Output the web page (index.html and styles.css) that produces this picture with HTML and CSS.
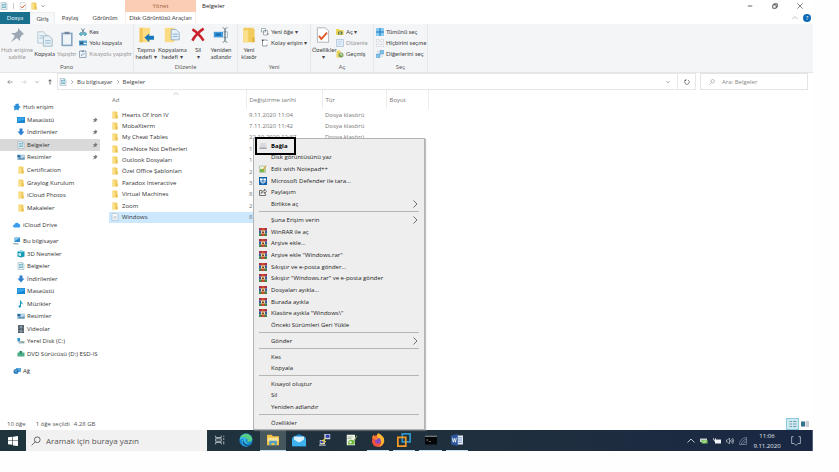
FILE: index.html
```html
<!DOCTYPE html>
<html lang="tr">
<head>
<meta charset="utf-8">
<title>Belgeler</title>
<link rel="stylesheet" href="styles.css">
</head>
<body>
<svg class="sprite" aria-hidden="true">
  <symbol id="folder" viewBox="0 0 16 16"><path d="M3 1h8l2 2v12H3z" fill="#f3cf62"/><path d="M3 3h5v12H3z" fill="#fbe08c"/><path d="M11 9h2v6h-2z" fill="#e0b23f"/></symbol>
  <symbol id="doc" viewBox="0 0 16 16"><path d="M2 1h9l3 3v11H2z" fill="#e8f1f4" stroke="#8ea7b2"/><path d="M4 5h4M4 8h8M4 11h8" stroke="#4c9cb8" stroke-width="1.4"/><path d="M9 3h3v3H9z" fill="#6ab0c8"/></symbol>
  <symbol id="disc" viewBox="0 0 16 16"><path d="M2 1h9l3 3v11H2z" fill="#f7f9fb" stroke="#9aabb8"/><circle cx="8" cy="9" r="3.5" fill="#c5d3dd"/><circle cx="8" cy="9" r="1" fill="#fff"/></symbol>
  <symbol id="desktop" viewBox="0 0 16 16"><path d="M0 2h16v12H0z" fill="#1586d3"/><path d="M1 3h14v4L1 12z" fill="#37a4ea"/></symbol>
  <symbol id="down" viewBox="0 0 16 16"><path d="M5 1h6v6h4l-7 8-7-8h4z" fill="#2f7fd0"/></symbol>
  <symbol id="picture" viewBox="0 0 16 16"><path d="M0 3h16v11H0z" fill="#b9d3e6"/><path d="M1 4h6v5H1z" fill="#2d6da5"/><path d="M1 13l5-4 4 2 5-3v5z" fill="#5b8bad"/></symbol>
  <symbol id="star" viewBox="0 0 16 16"><path d="M5 2l6-1 1 5 4 2-4 2-1 5-4-2-5 2 1-5-2-4 4-1z" fill="#2790d8"/></symbol>
  <symbol id="cloud" viewBox="0 0 16 16"><path d="M3 13a3 3 0 010-6 5 5 0 019-1 4 4 0 011 7z" fill="#3c9df0"/></symbol>
  <symbol id="pc" viewBox="0 0 16 16"><path d="M3 1h11v9H3z" fill="#2d8bcb"/><path d="M4 2h9L4 8z" fill="#86c8ef"/><path d="M0 12h10l2 3H1z" fill="#9fb6c4"/></symbol>
  <symbol id="cube" viewBox="0 0 16 16"><path d="M1 3l7-2 7 2v10l-7 2-7-2z" fill="#169bb5"/><path d="M1 3l7-2 7 2-7 2z" fill="#7ddae4"/><path d="M3 6l5 1v5l-5-1z" fill="#d7f3f5"/></symbol>
  <symbol id="music" viewBox="0 0 16 16"><path d="M6 1h2c0 4 5 4 3 9 0-3-2-3-3-3v6c0 3-5 3-5 0 0-2 2-3 3-2z" fill="#1b9bc4"/></symbol>
  <symbol id="video" viewBox="0 0 16 16"><path d="M2 0h12v16H2z" fill="#4a525a"/><path d="M5 1h6v6H5zM5 9h6v6H5z" fill="#8495a5"/><path d="M3 1v15M13 1v15" stroke="#d0d5da" stroke-dasharray="1 2"/></symbol>
  <symbol id="drive" viewBox="0 0 16 16"><path d="M1 2h5v7H1z" fill="#2496c9"/><path d="M3 8h12v5H3z" fill="#a8b5bd"/><path d="M10 11h4v1h-4z" fill="#38a85a"/></symbol>
  <symbol id="dvd" viewBox="0 0 16 16"><path d="M1 5h14v8H1z" fill="#4caf8a"/><path d="M5 2h5v5H5z" fill="#2c8a66"/></symbol>
  <symbol id="network" viewBox="0 0 16 16"><path d="M6 2h10v8H6z" fill="#56a6db"/><circle cx="6" cy="9" r="5" fill="#2577b8"/><path d="M3 8h5M6 5v8" stroke="#9bd0f2"/></symbol>
  <symbol id="pin" viewBox="0 0 16 16"><path d="M9 1l6 6-2 1-2 3v3l-3-3-6 4 4-6-4-3h4l3-2z" fill="currentColor"/></symbol>
  <symbol id="check" viewBox="0 0 16 20"><path d="M1 1h10l4 4v14H1z" fill="#fff" stroke="#a0a6ab"/><path d="M3 11l3 4 7-8" fill="none" stroke="#df5a2c" stroke-width="2.4"/></symbol>
  <symbol id="pages" viewBox="0 0 20 20"><path d="M1 1h7l4 4v10H1z" fill="#edf3f7" stroke="#a9bfcc"/><path d="M8 6h7l4 4v9H8z" fill="#e5eff5" stroke="#94b0c0"/><path d="M3 6h5M3 9h4M10 12h7M10 15h7" stroke="#8cb4ca"/></symbol>
  <symbol id="clipboard" viewBox="0 0 16 20"><path d="M1 2h14v17H1z" fill="#5d84af"/><path d="M3 4h10v13H3z" fill="#eef4fa"/><path d="M5 1h6v3H5z" fill="#40597a"/></symbol>
  <symbol id="scissors" viewBox="0 0 16 16"><path d="M5 1l5 9M11 1L6 10" stroke="#4a7181" stroke-width="1.6"/><circle cx="4" cy="12" r="2.5" fill="none" stroke="#178aa5" stroke-width="2"/><circle cx="12" cy="12" r="2.5" fill="none" stroke="#178aa5" stroke-width="2"/></symbol>
  <symbol id="path" viewBox="0 0 16 16"><path d="M0 3h16v10H0z" fill="#5aa7d6"/><path d="M2 5l2 6 2-6 2 6" stroke="#153e63" stroke-width="1.4" fill="none"/><path d="M10 9h5" stroke="#fff" stroke-width="2"/></symbol>
  <symbol id="shortcut" viewBox="0 0 16 16"><path d="M1 2h13v13H1z" fill="#eef3f8" stroke="#7c92a8" stroke-width="1.5"/><path d="M5 1h5v3H5z" fill="#7c92a8"/><path d="M5 12c0-4 3-5 6-4" stroke="#6284a6" stroke-width="1.5" fill="none"/></symbol>
  <symbol id="move" viewBox="0 0 20 20"><path d="M2 1h13v18H2z" fill="#fbdc83"/><path d="M2 1h4v18H2z" fill="#f1c75b"/><path d="M8 13l6-5v3h6v5h-6v3z" fill="#1879b8"/></symbol>
  <symbol id="copyto" viewBox="0 0 20 20"><path d="M1 1h12v18H1z" fill="#fbdc83"/><path d="M9 3h6l4 4v9H9z" fill="#e4effa" stroke="#86a5c0"/><path d="M11 9h6M11 12h6" stroke="#6f9fca"/></symbol>
  <symbol id="cross" viewBox="0 0 20 20"><path d="M3 3c5 3 10 8 14 14M17 2C11 6 6 11 3 17" stroke="#c9202b" stroke-width="3.2" fill="none"/></symbol>
  <symbol id="rename" viewBox="0 0 20 20"><path d="M1 6h12v7H1z" fill="#3f9adb"/><path d="M3 8h7v3H3z" fill="#1c6cb0"/><path d="M13 6h5v7h-5" fill="#fff" stroke="#88a5b8"/><path d="M12 1c2 0 3 1 3 3v12c0 2-1 3-3 3M18 1c-2 0-3 1-3 3v12c0 2 1 3 3 3" stroke="#5c6e7a" fill="none"/></symbol>
  <symbol id="bigfolder" viewBox="0 0 20 20"><path d="M3 1h12l2 2v16H3z" fill="#f1cb5c"/><path d="M3 4h6v15H3z" fill="#fbe08c"/><path d="M14 13h3v6h-3z" fill="#e1b545"/></symbol>
  <symbol id="newitem" viewBox="0 0 16 16"><path d="M1 1h8v7H1zM5 5h8v9H5z" fill="#fff" stroke="#7e9099" stroke-width="1.4"/><path d="M11 12h5" stroke="#555"/></symbol>
  <symbol id="ease" viewBox="0 0 16 16"><path d="M12 4V2H3v12h9v-3" fill="#fff" stroke="#75838b" stroke-width="1.5"/><path d="M1 1l5 1-3 3z" fill="#444"/></symbol>
  <symbol id="openf" viewBox="0 0 16 16"><path d="M0 2h6l2 2h7v10H0z" fill="#efd55c"/><path d="M4 7h9v6H4z" fill="#5e7c3c"/><path d="M6 9h4v2H6z" fill="#e9ecf2"/></symbol>
  <symbol id="edit" viewBox="0 0 16 16"><path d="M1 1h14v14H1z" fill="#e2edf7" stroke="#a5bfd6" stroke-width="1.4"/><path d="M4 5h7M4 8h7M4 11h5" stroke="#aac8e2"/></symbol>
  <symbol id="history" viewBox="0 0 16 16"><path d="M1 1h8v14H1z" fill="#efd55c"/><circle cx="10" cy="10" r="5" fill="#7ba156"/><path d="M10 6v4h3" stroke="#fff" stroke-width="1.4" fill="none"/></symbol>
  <symbol id="selall" viewBox="0 0 16 16"><path d="M0 0h16v16H0z" fill="#8acbf1"/><path d="M8 0v16M0 8h16" stroke="#1b7bbb" stroke-width="2"/></symbol>
  <symbol id="selnone" viewBox="0 0 16 16"><path d="M1 1h5v5H1zM10 1h5v5h-5zM1 10h5v5H1zM10 10h5v5h-5z" fill="#fff" stroke="#a6b0b8" stroke-dasharray="2 1"/></symbol>
  <symbol id="selinv" viewBox="0 0 16 16"><path d="M8 1h7v7H8zM1 8h7v7H1z" fill="#85c4ed" stroke="#3a8fc6"/><path d="M2 3h4M11 12h3" stroke="#9aa5ad"/></symbol>
  <symbol id="search" viewBox="0 0 16 16"><circle cx="10" cy="6" r="4.6" fill="none" stroke="currentColor" stroke-width="1.4"/><path d="M7 9l-6 6" stroke="currentColor" stroke-width="1.4"/></symbol>
  <symbol id="left" viewBox="0 0 16 16"><path d="M15 8H2M7 3L2 8l5 5" fill="none" stroke="currentColor" stroke-width="1.5"/></symbol>
  <symbol id="right" viewBox="0 0 16 16"><path d="M1 8h13M9 3l5 5-5 5" fill="none" stroke="currentColor" stroke-width="1.5"/></symbol>
  <symbol id="up" viewBox="0 0 16 16"><path d="M8 15V2M4 6l4-4 4 4" fill="none" stroke="currentColor" stroke-width="1.8"/></symbol>
  <symbol id="chev" viewBox="0 0 16 16"><path d="M2 5l6 6 6-6" fill="none" stroke="currentColor" stroke-width="2"/></symbol>
  <symbol id="chevup" viewBox="0 0 16 16"><path d="M1 11l7-7 7 7" fill="none" stroke="currentColor" stroke-width="1.6"/></symbol>
  <symbol id="chevright" viewBox="0 0 16 16"><path d="M5 1l7 7-7 7" fill="none" stroke="currentColor" stroke-width="1.7"/></symbol>
  <symbol id="refresh" viewBox="0 0 16 16"><path d="M5 3a6 6 0 106 0M5 0v4H1" fill="none" stroke="currentColor" stroke-width="1.7"/></symbol>
  <symbol id="winmin" viewBox="0 0 16 16"><path d="M2 8h12" stroke="currentColor" stroke-width="2"/></symbol>
  <symbol id="winmax" viewBox="0 0 16 16"><path d="M2 5h9v9H2zM5 5V2h9v9h-3" fill="none" stroke="currentColor" stroke-width="2"/></symbol>
  <symbol id="winclose" viewBox="0 0 16 16"><path d="M1 1l14 14M15 1L1 15" stroke="currentColor" stroke-width="1.6"/></symbol>
  <symbol id="rar" viewBox="0 0 16 16"><path d="M0 0h16v5H0z" fill="#a62f45"/><path d="M0 5h16v6H0z" fill="#35589e"/><path d="M0 11h16v5H0z" fill="#3f8444"/><path d="M5 0h6v16H5z" fill="#d2492f"/><path d="M4 5h8v6H4z" fill="#f1dfa0"/><path d="M6 7h4v3H6z" fill="#774428"/></symbol>
  <symbol id="npp" viewBox="0 0 16 16"><path d="M1 2h12v13H1z" fill="#e9f2dd" stroke="#8b9a80"/><path d="M2 8h9v6H2z" fill="#78b84b"/><path d="M7 9l6-8 2 1-6 9z" fill="#d9a43a"/></symbol>
  <symbol id="nppbar" viewBox="0 0 16 16"><path d="M1 1h11v14H1z" fill="#eef4e6"/><path d="M2 4h7M2 6h5" stroke="#9aa894"/><path d="M3 14c-1-5 2-7 6-6 3 1 3 4 2 6z" fill="#6cb83a"/><circle cx="6" cy="11" r="1.5" fill="#fff"/><path d="M10 9l4-7 1 1-4 7z" fill="#8aa060"/></symbol>
  <symbol id="shield" viewBox="0 0 16 16"><path d="M0 0h16v16H0z" fill="#1464ac"/><path d="M2 3h12v6l-6 5-6-5z" fill="#fff"/><path d="M8 2v12M2 8h12" stroke="#1464ac" stroke-width="1.6"/></symbol>
  <symbol id="share" viewBox="0 0 16 16"><path d="M6 5H1v10h12v-4" fill="none" stroke="#333" stroke-width="1.3"/><path d="M4 11c1-5 4-6 7-6V2l4 5-4 4V8c-3 0-5 0-7 3z" fill="none" stroke="#333" stroke-width="1.2"/></symbol>
  <symbol id="mount" viewBox="0 0 16 16"><path d="M2 2h12l1 9v3H1v-3z" fill="#d8dadd"/><path d="M1 11h14v3H1z" fill="#a5a9ae"/></symbol>
  <symbol id="win" viewBox="0 0 16 16"><path d="M0 2l7-1v6H0zM8 1l8-1v7H8zM0 8h7v6l-7-1zM8 8h8v8l-8-1z" fill="#fff"/></symbol>
  <symbol id="taskview" viewBox="0 0 16 16"><path d="M1 1v3h9V1M1 15v-3h9v3M1 6h9v4H1zM14 1v2M14 5v3M14 10v5" fill="none" stroke="#c4ced3" stroke-width="1.3"/></symbol>
  <symbol id="edge" viewBox="0 0 16 16"><circle cx="8" cy="8" r="7.6" fill="#1682cf"/><path d="M1 6C3-1 13-1 15 6c1 4-3 5-6 4 2-2 0-4-2-4S3 6 1 6z" fill="#58cc83"/><path d="M1 6c4-3 9-1 7 2-1 2 2 5 6 4-4 6-11 3-11-2 0-2 1-3 3-3-2-1-4 0-5 2z" fill="#35b7e5"/><path d="M6 8c-2 3 3 7 8 4-3 5-10 3-10-2z" fill="#115696"/></symbol>
  <symbol id="explorer" viewBox="0 0 16 16"><path d="M0 1h6l2 2h8v12H0z" fill="#f4c344"/><path d="M1 5h14v5H1z" fill="#fbe29a"/><path d="M3 15V9h10v6h-3v-3H6v3z" fill="#4c9fc6"/></symbol>
  <symbol id="mail" viewBox="0 0 16 16"><path d="M0 5l8-4 8 4v10H0z" fill="#1585cc"/><path d="M2 4h12v7H2z" fill="#d9f1fc"/><path d="M0 6l8 5 8-5v9H0z" fill="#3db2ec"/></symbol>
  <symbol id="putty" viewBox="0 0 16 16"><path d="M7 0h8v7H7zM1 8h7v6H1z" fill="#c7ccd3"/><path d="M9 1h5v4H9zM2 9h5v3H2z" fill="#2b3bb5"/><path d="M9 6l-5 3 5 1-5 3" stroke="#f3dc38" fill="none" stroke-width="1.3"/><path d="M0 14h9v2H0z" fill="#8a929c"/></symbol>
  <symbol id="firefox" viewBox="0 0 16 16"><circle cx="8" cy="9" r="7" fill="#f0503c"/><path d="M8 0c4 2 8 5 7 10-1 3-3 5-6 6 4-4 3-7 0-8-2-2-3-5-1-8z" fill="#fcb72e"/><circle cx="8" cy="9" r="3.2" fill="#8649be"/><path d="M1 5l2-3 2 3h4l-3 3z" fill="#fb8a2c"/></symbol>
  <symbol id="vmware" viewBox="0 0 16 16"><path d="M6 1h9v9H6z" fill="none" stroke="#2b95c9" stroke-width="2"/><path d="M1 5h9v10H1z" fill="none" stroke="#f19a27" stroke-width="2"/></symbol>
  <symbol id="cmd" viewBox="0 0 16 16"><path d="M0 2h16v12H0z" fill="#050607"/><path d="M0 2h16v2H0z" fill="#70777c"/><path d="M2 7l2 1-2 1M5 10h3" stroke="#777" fill="none"/></symbol>
  <symbol id="word" viewBox="0 0 16 16"><path d="M6 2h10v12H6z" fill="#e9effa"/><path d="M9 5h6M9 8h6M9 11h6" stroke="#5577b5"/><path d="M0 2l9-2v16l-9-2z" fill="#2b579a"/><path d="M2 5l1 6 1.500-5L6 11l1-6" stroke="#fff" fill="none" stroke-width="1.100"/></symbol>
  <symbol id="gpu" viewBox="0 0 16 16"><path d="M0 3h14v7H0z" fill="#c8ced1"/><path d="M3 6h12v7H3z" fill="#7cc35c"/><path d="M6 9l2 2 3-4" stroke="#fff" stroke-width="1.500" fill="none"/></symbol>
  <symbol id="battery" viewBox="0 0 16 16"><path d="M4 5h12v8H4z" fill="#eef1f5"/><path d="M1 2v4h4V2M3 6v3" stroke="#eef1f5" stroke-width="1.300" fill="none"/></symbol>
  <symbol id="sound" viewBox="0 0 16 16"><path d="M1 6h2l4-4v12l-4-4H1zM9 6q2 2 0 4M11 4q4 4 0 8M13 2q5 6 0 12" stroke="#d5dbe2" stroke-width="1.200" fill="none"/></symbol>
  <symbol id="wifi" viewBox="0 0 16 16"><path d="M1 15A14 14 0 0115 1M5 15A10 10 0 0115 5M9 15a6 6 0 016-6M1 15h14V1" stroke="#8c98aa" stroke-width="1.300" fill="none"/></symbol>
  <symbol id="notif" viewBox="0 0 16 16"><path d="M4 1H1v11h4l3 3 3-3h4V1h-3" stroke="#b9c2ce" stroke-width="1.300" fill="none"/></symbol>
  <symbol id="details" viewBox="0 0 16 16"><path d="M1 3h5M1 8h5M1 13h5M8 3h7M8 8h7M8 13h7" stroke="#5d8796" stroke-width="1.500"/></symbol>
  <symbol id="thumbs" viewBox="0 0 16 16"><path d="M0 3h8v10H0z" fill="#38718e"/><path d="M9 4h7M9 8h7M9 12h7" stroke="#93a3ac" stroke-width="2"/></symbol>
</svg>

<div class="screen">
  <header class="titlebar">
    <div class="quick">
      <svg class="i8"><use href="#doc"/></svg><span class="bar"></span>
      <button aria-label="Özellikler"><svg class="i8"><use href="#check"/></svg></button>
      <button aria-label="Yeni klasör"><svg class="i8"><use href="#folder"/></svg></button>
      <button aria-label="Özelleştir"><svg class="i4"><use href="#chev"/></svg></button>
    </div>
    <div class="manage">Yönet</div>
    <h1>Belgeler</h1>
    <div class="winbtns">
      <button aria-label="Simge durumuna küçült"><svg class="i6"><use href="#winmin"/></svg></button>
      <button aria-label="Geri yükle"><svg class="i6"><use href="#winmax"/></svg></button>
      <button aria-label="Kapat"><svg class="i6"><use href="#winclose"/></svg></button>
    </div>
  </header>

  <nav class="tabs">
    <button class="file">Dosya</button>
    <button class="active">Giriş</button>
    <button class="share">Paylaş</button>
    <button class="view">Görünüm</button>
    <button class="disk">Disk Görüntüsü Araçları</button>
    <span class="help"><svg class="i6"><use href="#chevup"/></svg><button aria-label="Yardım">?</button></span>
  </nav>

  <section class="ribbon">
    <div class="group pano">
      <div class="tools">
        <button class="big off w-xl"><svg class="i16"><use href="#pin"/></svg>Hızlı erişime<br>sabitle</button>
        <button class="big w-m"><svg class="i16"><use href="#pages"/></svg>Kopyala</button>
        <button class="big off w-m"><svg class="i16"><use href="#clipboard"/></svg>Yapıştır</button>
        <div class="stack">
          <button><svg class="i8"><use href="#scissors"/></svg>Kes</button>
          <button><svg class="i8"><use href="#path"/></svg>Yolu kopyala</button>
          <button class="off"><svg class="i8"><use href="#shortcut"/></svg>Kısayolu yapıştır</button>
        </div>
      </div>
      <p>Pano</p>
    </div>
    <div class="group duzenle">
      <div class="tools">
        <button class="big w-m"><svg class="i16"><use href="#move"/></svg>Taşıma<br>hedefi ▾</button>
        <button class="big w-l"><svg class="i16"><use href="#copyto"/></svg>Kopyalama<br>hedefi ▾</button>
        <button class="big w-m"><svg class="i16"><use href="#cross"/></svg>Sil<br>▾</button>
        <button class="big w-m"><svg class="i16"><use href="#rename"/></svg>Yeniden<br>adlandır</button>
      </div>
      <p>Düzenle</p>
    </div>
    <div class="group yeni">
      <div class="tools">
        <button class="big w-s"><svg class="i16"><use href="#bigfolder"/></svg>Yeni<br>klasör</button>
        <div class="stack">
          <button><svg class="i8"><use href="#newitem"/></svg>Yeni öğe ▾</button>
          <button><svg class="i8"><use href="#ease"/></svg>Kolay erişim ▾</button>
        </div>
      </div>
      <p>Yeni</p>
    </div>
    <div class="group ac">
      <div class="tools">
        <button class="big w-m"><svg class="i16"><use href="#check"/></svg>Özellikler<br>▾</button>
        <div class="stack">
          <button><svg class="i8"><use href="#openf"/></svg>Aç ▾</button>
          <button class="off"><svg class="i8"><use href="#edit"/></svg>Düzenle</button>
          <button><svg class="i8"><use href="#history"/></svg>Geçmiş</button>
        </div>
      </div>
      <p>Aç</p>
    </div>
    <div class="group sec">
      <div class="tools">
        <div class="stack">
          <button><svg class="i8"><use href="#selall"/></svg>Tümünü seç</button>
          <button><svg class="i8"><use href="#selnone"/></svg>Hiçbirini seçme</button>
          <button><svg class="i8"><use href="#selinv"/></svg>Diğerlerini seç</button>
        </div>
      </div>
      <p>Seç</p>
    </div>
  </section>

  <div class="address">
    <div class="history">
      <button aria-label="Geri"><svg class="i6"><use href="#left"/></svg></button>
      <button class="dim" aria-label="İleri"><svg class="i6"><use href="#right"/></svg></button>
      <button aria-label="Son konumlar"><svg class="i4"><use href="#chev"/></svg></button>
      <button class="dark" aria-label="Yukarı"><svg class="i6"><use href="#up"/></svg></button>
    </div>
    <div class="crumbs">
      <svg class="i8"><use href="#doc"/></svg>
      <svg class="i4"><use href="#chevright"/></svg><a href="#">Bu bilgisayar</a>
      <svg class="i4"><use href="#chevright"/></svg><a href="#">Belgeler</a>
      <button class="drop" aria-label="Önceki konumlar"><svg class="i4"><use href="#chev"/></svg></button>
      <button class="reload" aria-label="Yenile"><svg class="i6"><use href="#refresh"/></svg></button>
    </div>
    <label class="find"><svg class="i6"><use href="#search"/></svg><input type="search" aria-label="Ara: Belgeler" placeholder="Ara: Belgeler"></label>
  </div>

  <main class="content">
    <nav class="side">
      <ul class="quickaccess">
        <li class="root"><svg class="i8"><use href="#star"/></svg>Hızlı erişim</li>
        <li><svg class="i8"><use href="#desktop"/></svg>Masaüstü<svg class="i6 pin"><use href="#pin"/></svg></li>
        <li><svg class="i8"><use href="#down"/></svg>İndirilenler<svg class="i6 pin"><use href="#pin"/></svg></li>
        <li class="current"><svg class="i8"><use href="#doc"/></svg>Belgeler<svg class="i6 pin"><use href="#pin"/></svg></li>
        <li><svg class="i8"><use href="#picture"/></svg>Resimler<svg class="i6 pin"><use href="#pin"/></svg></li>
        <li><svg class="i8"><use href="#folder"/></svg>Certification</li>
        <li><svg class="i8"><use href="#folder"/></svg>Graylog Kurulum</li>
        <li><svg class="i8"><use href="#folder"/></svg>iCloud Photos</li>
        <li><svg class="i8"><use href="#folder"/></svg>Makaleler</li>
      </ul>
      <ul><li class="root"><svg class="i8"><use href="#cloud"/></svg>iCloud Drive</li></ul>
      <ul class="computer">
        <li class="root"><svg class="i8"><use href="#pc"/></svg>Bu bilgisayar</li>
        <li><svg class="i8"><use href="#cube"/></svg>3D Nesneler</li>
        <li><svg class="i8"><use href="#doc"/></svg>Belgeler</li>
        <li><svg class="i8"><use href="#down"/></svg>İndirilenler</li>
        <li><svg class="i8"><use href="#desktop"/></svg>Masaüstü</li>
        <li><svg class="i8"><use href="#music"/></svg>Müzikler</li>
        <li><svg class="i8"><use href="#picture"/></svg>Resimler</li>
        <li><svg class="i8"><use href="#video"/></svg>Videolar</li>
        <li><svg class="i8"><use href="#drive"/></svg>Yerel Disk (C:)</li>
        <li><svg class="i8"><use href="#dvd"/></svg>DVD Sürücüsü (D:) ESD-IS</li>
      </ul>
      <ul><li class="root"><svg class="i8"><use href="#network"/></svg>Ağ</li></ul>
    </nav>

    <div class="files">
      <svg class="i6 sort"><use href="#chevup"/></svg>
      <table>
        <colgroup><col class="c-name"><col class="c-date"><col class="c-type"><col class="c-size"><col></colgroup>
        <thead><tr><th>Ad</th><th>Değiştirme tarihi</th><th>Tür</th><th>Boyut</th><td></td></tr></thead>
        <tbody>
          <tr><td><svg class="i8"><use href="#folder"/></svg>Hearts Of Iron IV</td><td>9.11.2020 11:04</td><td>Dosya klasörü</td><td></td></tr>
          <tr><td><svg class="i8"><use href="#folder"/></svg>MobaXterm</td><td>7.11.2020 11:42</td><td>Dosya klasörü</td><td></td></tr>
          <tr><td><svg class="i8"><use href="#folder"/></svg>My Cheat Tables</td><td>22.10.2020 12:37</td><td>Dosya klasörü</td><td></td></tr>
          <tr><td><svg class="i8"><use href="#folder"/></svg>OneNote Not Defterleri</td><td>1</td><td></td><td></td></tr>
          <tr><td><svg class="i8"><use href="#folder"/></svg>Outlook Dosyaları</td><td>1</td><td></td><td></td></tr>
          <tr><td><svg class="i8"><use href="#folder"/></svg>Özel Office Şablonları</td><td>2</td><td></td><td></td></tr>
          <tr><td><svg class="i8"><use href="#folder"/></svg>Paradox Interactive</td><td>3</td><td></td><td></td></tr>
          <tr><td><svg class="i8"><use href="#folder"/></svg>Virtual Machines</td><td>8</td><td></td><td></td></tr>
          <tr><td><svg class="i8"><use href="#folder"/></svg>Zoom</td><td>2</td><td></td><td></td></tr>
          <tr class="selected"><td><svg class="i8"><use href="#disc"/></svg>Windows</td><td>8</td><td></td><td></td></tr>
        </tbody>
      </table>

      <div class="menu" role="menu">
        <div class="g6">
          <button class="default"><svg class="i8"><use href="#mount"/></svg>Bağla</button>
          <button><i></i>Disk görüntüsünü yaz</button>
          <button><svg class="i8"><use href="#npp"/></svg>Edit with Notepad++</button>
          <button><svg class="i8"><use href="#shield"/></svg>Microsoft Defender ile tara...</button>
          <button><svg class="i8"><use href="#share"/></svg>Paylaşım</button>
          <button><i></i>Birlikte aç<svg class="i8 more"><use href="#chevright"/></svg></button>
        </div>
        <hr>
        <div class="g10">
          <button><i></i>Şuna Erişim verin<svg class="i8 more"><use href="#chevright"/></svg></button>
          <button><svg class="i8"><use href="#rar"/></svg>WinRAR ile aç</button>
          <button><svg class="i8"><use href="#rar"/></svg>Arşive ekle...</button>
          <button><svg class="i8"><use href="#rar"/></svg>Arşive ekle "Windows.rar"</button>
          <button><svg class="i8"><use href="#rar"/></svg>Sıkıştır ve e-posta gönder...</button>
          <button><svg class="i8"><use href="#rar"/></svg>Sıkıştır "Windows.rar" ve e-posta gönder</button>
          <button><svg class="i8"><use href="#rar"/></svg>Dosyaları ayıkla...</button>
          <button><svg class="i8"><use href="#rar"/></svg>Burada ayıkla</button>
          <button><svg class="i8"><use href="#rar"/></svg>Klasöre ayıkla "Windows\"</button>
          <button><i></i>Önceki Sürümleri Geri Yükle</button>
        </div>
        <hr>
        <div class="g1"><button><i></i>Gönder<svg class="i8 more"><use href="#chevright"/></svg></button></div>
        <hr>
        <div class="g2">
          <button><i></i>Kes</button>
          <button><i></i>Kopyala</button>
        </div>
        <hr>
        <div class="g3">
          <button><i></i>Kısayol oluştur</button>
          <button><i></i>Sil</button>
          <button><i></i>Yeniden adlandır</button>
        </div>
        <hr>
        <div class="g1"><button><i></i>Özellikler</button></div>
        <span class="marker"></span>
      </div>
    </div>
  </main>

  <footer class="status">
    <span>10 öğe</span><span>1 öğe seçildi</span><span>4.28 GB</span>
    <div class="views">
      <button class="on" aria-label="Ayrıntılar"><svg class="i8"><use href="#details"/></svg></button>
      <button aria-label="Büyük simgeler"><svg class="i8"><use href="#thumbs"/></svg></button>
    </div>
  </footer>

  <div class="taskbar">
    <button class="start" aria-label="Başlat"><svg class="i10"><use href="#win"/></svg></button>
    <label class="tasksearch"><svg class="i10"><use href="#search"/></svg><input type="search" aria-label="Arama" placeholder="Aramak için buraya yazın"></label>
    <div class="apps">
      <button aria-label="Görev görünümü"><svg class="i10"><use href="#taskview"/></svg></button>
      <button aria-label="Edge"><svg class="i14"><use href="#edge"/></svg></button>
      <button class="focus run" aria-label="Dosya Gezgini"><svg class="i12"><use href="#explorer"/></svg></button>
      <button aria-label="Posta"><svg class="i14"><use href="#mail"/></svg></button>
      <button aria-label="PuTTY"><svg class="i12"><use href="#putty"/></svg></button>
      <button aria-label="Notepad++"><svg class="i12"><use href="#nppbar"/></svg></button>
      <button class="run" aria-label="Firefox"><svg class="i14"><use href="#firefox"/></svg></button>
      <button class="run" aria-label="VMware"><svg class="i14"><use href="#vmware"/></svg></button>
      <button class="run" aria-label="Komut İstemi"><svg class="i12"><use href="#cmd"/></svg></button>
      <button class="run" aria-label="Word"><svg class="i12"><use href="#word"/></svg></button>
    </div>
    <div class="tray">
      <svg class="i8"><use href="#chevup"/></svg>
      <svg class="i8"><use href="#gpu"/></svg>
      <svg class="i8"><use href="#battery"/></svg>
      <svg class="i8"><use href="#sound"/></svg>
      <svg class="i8"><use href="#wifi"/></svg>
    </div>
    <time>11:06<br>9.11.2020</time>
    <button class="notif" aria-label="Bildirimler"><svg class="i10"><use href="#notif"/></svg></button>
  </div>
</div>
</body>
</html>
```
FILE: styles.css
```css
* { box-sizing: border-box; }
body {
  margin: 0;
  padding: 0 26px 21px 0;
  background: #fefefe;
  color: #333;
  font: 6px/10px "Open Sans", "Noto Sans", sans-serif;
}
button, input { font: inherit; color: inherit; border: 0; margin: 0; padding: 0; background: none; outline: 0; }
button { display: flex; align-items: center; white-space: nowrap; }
h1, p, ul { margin: 0; padding: 0; font-size: inherit; font-weight: normal; }
a { color: inherit; text-decoration: none; }
svg { flex: none; display: block; }
.sprite { position: absolute; width: 0; height: 0; }
.i4 { width: 4px; height: 4px; }
.i6 { width: 6px; height: 6px; }
.i8 { width: 8px; height: 8px; }
.i10 { width: 10px; height: 10px; }
.i12 { width: 12px; height: 12px; }
.i14 { width: 14px; height: 14px; }
.i16 { width: 16px; height: 16px; }

.screen { display: flex; flex-direction: column; min-height: calc(100vh - 21px); background: #fff; }

.titlebar { display: flex; align-items: center; height: 12px; }
.quick { display: flex; align-items: center; gap: 3px; width: 125px; }
.quick .bar { width: 1px; height: 6px; margin: 0 2px; background: #ccc; }
.manage { width: 71px; height: 12px; line-height: 12px; text-align: center; background: #fccdb5; color: #9a5f44; }
.titlebar h1 { margin-left: 6px; color: #222; }
.winbtns { display: flex; gap: 19px; margin-left: auto; padding-right: 10px; }

.tabs, .ribbon { font-family: Lato, "Open Sans", sans-serif; }
.tabs { display: flex; height: 12px; color: #444; }
.tabs > button { justify-content: center; }
.tabs .file { width: 30px; background: #19708f; color: #e3f1f6; }
.tabs .active { width: 25px; background: #f7f8f9; border: 1px solid #eceef0; border-bottom: 0; }
.tabs .share { width: 30px; }
.tabs .view { width: 40px; }
.tabs .disk { width: 71px; border: solid #fdeee6; border-width: 0 1px; }
.help { display: flex; align-items: center; gap: 5px; margin-left: auto; padding-right: 2px; color: #999; }
.help button { justify-content: center; width: 8px; height: 8px; border-radius: 50%; background: #0f68b2; color: #fff; }

.ribbon { display: flex; height: 49px; background: #f4f5f7; border-bottom: 1px solid #e3e5e7; color: #444; }
.group { display: flex; flex-direction: column; justify-content: space-between; border-right: 1px solid #e6e8ea; padding: 2px 1px 1px; }
.group p { text-align: center; color: #666; line-height: 8px; }
.tools { display: flex; gap: 1px; }
.pano { width: 134px; }
.duzenle { width: 104px; }
.yeni { width: 73px; }
.ac { width: 63px; }
.sec { width: 54px; }
.big { display: block; text-align: center; line-height: 7px; }
.big svg { margin: 1px auto 3px; }
.w-s { width: 20px; }
.w-m { width: 22px; }
.w-l { width: 28px; }
.w-xl { width: 33px; }
.off { color: #999; }
.pano .off .i16 { opacity: .7; color: #768796; }
.stack { display: grid; grid-template-rows: repeat(3, 11px); margin-left: 1px; }
.stack button { gap: 2px; }

.address { display: flex; gap: 4px; height: 17px; padding-right: 5px; color: #555; }
.history { display: flex; align-items: center; gap: 8px; width: 53px; padding-left: 7px; }
.dim { color: #bbb; }
.dark { color: #222; }
.crumbs { display: flex; flex: 1; align-items: center; gap: 3px; border: 1px solid #e7e7e7; padding-left: 1px; color: #444; }
.crumbs .drop { margin-left: auto; }
.crumbs .reload { align-self: stretch; justify-content: center; width: 18px; margin-left: 4px; border-left: 1px solid #e7e7e7; }
.find { display: flex; align-items: center; gap: 7px; width: 108px; border: 1px solid #e3e3e3; padding-left: 8px; color: #888; }
.find input { flex: 1; min-width: 0; }
input::placeholder { color: inherit; opacity: 1; }

.content { display: flex; flex: 1; }
.side { display: flex; flex-direction: column; gap: 4px; width: 109px; padding: 11px 9px 0 0; }
.side ul { display: grid; grid-auto-rows: 1fr; height: 13px; list-style: none; }
.side .quickaccess { height: 113px; }
.side .computer { height: 125px; }
.side li { display: flex; align-items: center; gap: 2px; padding-left: 17px; white-space: nowrap; }
.side .root { padding-left: 13px; }
.side .current { background: #d9d9d9; }
.side .pin { margin: 0 2px 0 auto; color: #777; }

.files { position: relative; flex: 1; }
.sort { position: absolute; left: 64px; top: 1px; color: #aaa; }
table { width: 100%; height: 133px; table-layout: fixed; border-collapse: collapse; color: #777; }
.c-name { width: 137px; }
.c-date { width: 76px; }
.c-type { width: 64px; }
.c-size { width: 42px; }
th, td { padding: 0 0 0 3px; text-align: left; font-weight: normal; white-space: nowrap; }
thead tr { height: 19px; }
th { border-right: 1px solid #ececec; }
td:first-child { display: flex; align-items: center; gap: 3px; height: 11px; padding-left: 2px; color: #333; }
.selected td { background: #cce8ff; }
.selected td:nth-child(n+4) { background: none; }

.menu {
  position: absolute;
  left: 144px;
  top: 48px;
  z-index: 2;
  width: 172px;
  padding: 1px 5px 0;
  background: #eee;
  border: 1px solid #b3b3b3;
  box-shadow: 1px 1px 1px #8888;
  color: #222;
}
.menu > div { display: grid; grid-auto-rows: 1fr; }
.menu button { gap: 4px; width: 100%; }
.menu i { width: 8px; }
.menu .more { margin-left: auto; color: #555; }
.menu .default { font-weight: bold; color: #000; }
.g6 { height: 70px; }
.g10 { height: 117px; }
.g1 { height: 12px; }
.g2 { height: 23px; }
.g3 { height: 35px; }
hr { height: 1px; margin: 1px 0 2px; border: 0; background: #b5b5b5; }
.marker { position: absolute; left: 1px; top: -2px; width: 41px; height: 18px; border: 2px solid #000; }

.status { display: flex; align-items: center; gap: 10px; height: 12px; padding-left: 7px; color: #555; }
.status span:nth-child(3) { margin-left: -6px; }
.views { display: flex; gap: 2px; margin-left: auto; padding-right: 4px; }
.views button { justify-content: center; height: 12px; }
.views .on { width: 13px; background: #cdeaf3; border: 1px solid #8ccbdc; }

.taskbar { display: flex; height: 21px; background: linear-gradient(90deg, #1f343d, #202f3d 60%, #192744); border-right: 1px solid #53607a; color: #e6eaf0; }
.start { justify-content: center; width: 26px; }
.tasksearch { display: flex; align-items: center; gap: 5px; width: 181px; padding-left: 5px; background: #f1f1f2; color: #555; font-size: 8px; }
.tasksearch input { flex: 1; min-width: 0; }
.apps { display: grid; grid-template-columns: repeat(10, 1fr); width: 263px; }
.apps button { justify-content: center; border-bottom: 1px solid transparent; margin: 0 2px; }
.apps .run { border-color: #bfe0f5; }
.apps .focus { margin: 0; background: #46565d; }
.tray { display: flex; align-items: center; gap: 5px; margin-left: auto; padding-right: 1px; }
time { width: 38px; text-align: center; align-self: center; }
.notif { justify-content: center; width: 20px; margin-right: 6px; }
```
